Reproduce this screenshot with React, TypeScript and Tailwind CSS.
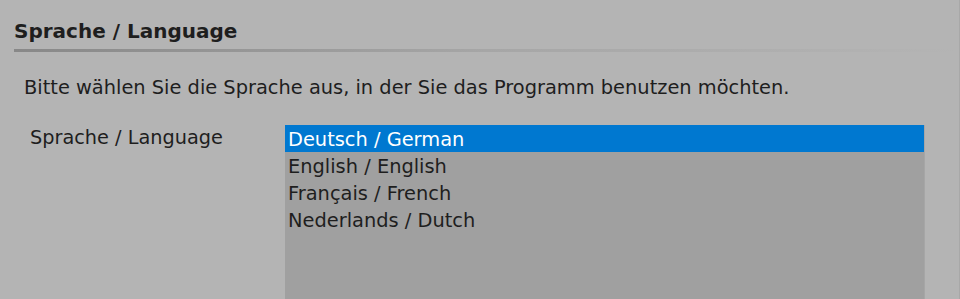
import React from 'react';

const languages = [
  'Deutsch / German',
  'English / English',
  'Français / French',
  'Nederlands / Dutch',
];

export default function App() {
  const selected = 0;

  return (
    <div className="w-[960px] h-[299px] overflow-hidden bg-[#b4b4b4] border-r border-[#a8a8a8] font-['DejaVu_Sans',sans-serif] text-[#1e1e1e]">
      <div className="pl-[14px] pt-[18px]">
        <h2 className="text-[20px] leading-[26px] font-bold">Sprache / Language</h2>
        <div className="mt-[5px] h-[3px] bg-gradient-to-r from-[#888888] via-[#a6a6a6] to-[#b4b4b4]" />
      </div>

      <p className="ml-[24px] mt-[23px] text-[19.4px] leading-[26px]">
        Bitte wählen Sie die Sprache aus, in der Sie das Programm benutzen möchten.
      </p>

      <div className="flex mt-[24px]">
        <div className="w-[285px] pl-[30px] text-[19.3px] leading-[26px]">Sprache / Language</div>
        <ul className="w-[640px] h-[200px] bg-[#a0a0a0] border-r border-[#a6a6a6] text-[19.4px]">
          {languages.map((lang, i) => (
            <li
              key={lang}
              className={`h-[27px] leading-[29px] pl-[3px] ${i === selected ? 'bg-[#0078d0] text-white' : ''}`}
            >
              {lang}
            </li>
          ))}
        </ul>
      </div>
    </div>
  );
}
